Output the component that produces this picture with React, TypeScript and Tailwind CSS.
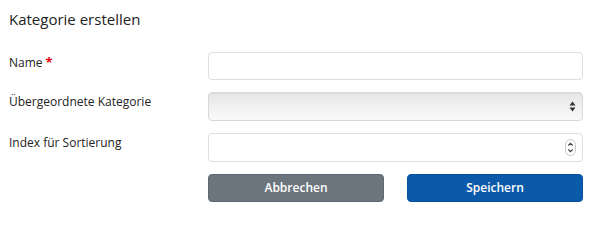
import React from 'react';

const font = { fontFamily: '"Open Sans", "Noto Sans", sans-serif' };

const Label: React.FC<{ text: string; required?: boolean }> = ({ text, required }) => (
  <label className="w-[199px] shrink-0 pt-[1px] text-[12px] leading-[18px] text-[#222]">
    {text}
    {required && <span className="ml-[3px] text-[13px] font-bold text-[#e3000f]">*</span>}
  </label>
);

const SelectArrows = () => (
  <svg width="7" height="11" viewBox="0 0 7 11" className="text-[#333]">
    <path d="M3.5 0.5 L6.5 4.5 L0.5 4.5 Z" fill="currentColor" />
    <path d="M3.5 10.5 L6.5 6.5 L0.5 6.5 Z" fill="currentColor" />
  </svg>
);

const Spinner = () => (
  <svg width="11" height="17" viewBox="0 0 11 17">
    <rect x="0.5" y="0.5" width="10" height="16" rx="5" fill="#fff" stroke="#c8c8c8" />
    <path d="M3.3 6.5 L5.5 4.3 L7.7 6.5" fill="none" stroke="#444" strokeWidth="1.1" />
    <path d="M3.3 10.5 L5.5 12.7 L7.7 10.5" fill="none" stroke="#444" strokeWidth="1.1" />
  </svg>
);

export default function App() {
  return (
    <div className="w-[600px] h-[224px] bg-white pl-[9px] pr-[17px] pt-[8px]" style={font}>
      <h2 className="text-[15px] leading-[22px] text-[#222]">Kategorie erstellen</h2>

      <form className="mt-[22px] flex flex-col gap-[12px]">
        <div className="flex">
          <Label text="Name" required />
          <input
            type="text"
            className="h-[28px] flex-1 rounded-[4px] border border-[#dcdee2] bg-white px-2 text-[13px] outline-none"
          />
        </div>

        <div className="flex">
          <Label text="Übergeordnete Kategorie" />
          <div className="flex h-[29px] flex-1 items-center justify-end rounded-[4px] border border-[#d6d8dc] bg-gradient-to-b from-[#e6e6e6] to-[#fafafa] pr-[6px] shadow-[inset_0_1px_1px_rgba(0,0,0,0.05)]">
            <SelectArrows />
          </div>
        </div>

        <div className="flex">
          <Label text="Index für Sortierung" />
          <div className="flex h-[29px] flex-1 items-center justify-end rounded-[4px] border border-[#dcdee2] bg-white pr-[6px]">
            <Spinner />
          </div>
        </div>

        <div className="flex pl-[199px] gap-[23px]">
          <button
            type="button"
            className="h-[28px] flex-1 rounded-[4px] border border-[#5f666c] bg-[#6c757d] text-[12px] font-semibold text-white"
          >
            Abbrechen
          </button>
          <button
            type="button"
            className="h-[28px] flex-1 rounded-[4px] border border-[#0a52a0] bg-[#0b5aaa] text-[12px] font-semibold text-white"
          >
            Speichern
          </button>
        </div>
      </form>
    </div>
  );
}
